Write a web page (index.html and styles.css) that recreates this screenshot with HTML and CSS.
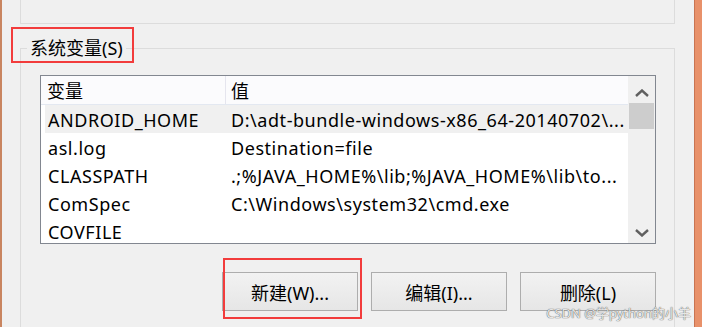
FILE: index.html
```html
<!DOCTYPE html>
<html lang="zh-CN">
<head>
    <meta charset="UTF-8">
    <title>系统变量</title>
    <link rel="stylesheet" href="styles.css">
</head>
<body>
    <div class="edge-left"></div>
    <main class="panel">
        <div class="group-prev"></div>
        <section class="group">
            <div class="group-head">
                <span class="group-title">系统变量(S)</span>
            </div>
            <div class="group-body">
                <div class="listbox">
                    <div class="list">
                        <div class="list-head">
                            <span class="head-name">变量</span>
                            <span class="head-value">值</span>
                        </div>
                        <div class="row selected">
                            <span class="cell-name">ANDROID_HOME</span>
                            <span class="cell-value">D:\adt-bundle-windows-x86_64-20140702\...</span>
                        </div>
                        <div class="row">
                            <span class="cell-name">asl.log</span>
                            <span class="cell-value">Destination=file</span>
                        </div>
                        <div class="row">
                            <span class="cell-name">CLASSPATH</span>
                            <span class="cell-value">.;%JAVA_HOME%\lib;%JAVA_HOME%\lib\to...</span>
                        </div>
                        <div class="row">
                            <span class="cell-name">ComSpec</span>
                            <span class="cell-value">C:\Windows\system32\cmd.exe</span>
                        </div>
                        <div class="row">
                            <span class="cell-name">COVFILE</span>
                            <span class="cell-value"></span>
                        </div>
                    </div>
                    <div class="scrollbar">
                        <span class="arrow">
                            <svg width="14" height="8" viewBox="0 0 14 8"><path d="M1 7 L7 1.5 L13 7" fill="none" stroke="#606060" stroke-width="2.4"/></svg>
                        </span>
                        <span class="thumb"></span>
                        <span class="track"></span>
                        <span class="arrow">
                            <svg width="14" height="8" viewBox="0 0 14 8"><path d="M1 1 L7 6.5 L13 1" fill="none" stroke="#606060" stroke-width="2.4"/></svg>
                        </span>
                    </div>
                </div>
                <div class="buttons">
                    <button type="button">新建(W)...</button>
                    <button type="button">编辑(I)...</button>
                    <button type="button">删除(L)</button>
                </div>
            </div>
        </section>
    </main>
    <div class="edge-right"></div>

    <!-- 标注框 -->
    <div class="mark mark-title"></div>
    <div class="mark mark-new"></div>
    <div class="watermark">CSDN @学python的小羊</div>
</body>
</html>
```

FILE: styles.css
```css
body {
    margin: 0;
    height: 327px;
    overflow: hidden;
    display: flex;
    position: relative;
    background-color: #f0f0f0;
    font-family: "Noto Sans", "Noto Sans CJK SC", sans-serif;
    font-size: 18px;
    color: #000;
}
.edge-left {
    width: 2px;
    background-color: #c98560;
}
.edge-right {
    width: 7px;
    border-left: 1px solid #c97452;
    background-color: #e8916a;
}
.panel {
    flex: 1;
    display: flex;
    flex-direction: column;
    padding: 0 19px 0 18px;
}
.group-prev {
    height: 23px;
    border: 1px solid #dcdcdc;
    border-top: none;
}
.group {
    flex: 1;
    display: flex;
    flex-direction: column;
    margin-top: 12px;
}
.group-head {
    display: flex;
    height: 24px;
}
.group-head::before,
.group-head::after {
    content: "";
    align-self: flex-end;
    height: 11px;
    border-top: 1px solid #dcdcdc;
}
.group-head::before {
    width: 6px;
    border-left: 1px solid #dcdcdc;
}
.group-head::after {
    flex: 1;
    border-right: 1px solid #dcdcdc;
}
.group-title {
    padding: 0 3px;
    line-height: 24px;
}
.group-body {
    flex: 1;
    padding: 0 18px 0 19px;
    border-left: 1px solid #dcdcdc;
    border-right: 1px solid #dcdcdc;
}
.listbox {
    display: flex;
    box-sizing: border-box;
    height: 169px;
    margin-top: 15px;
    border: 1px solid #828790;
    background-color: #ffffff;
}
.list {
    flex: 1;
    min-width: 0;
    overflow: hidden;
}
.list-head {
    display: flex;
    height: 28px;
    line-height: 26px;
    border-bottom: 1px solid #e3e8f1;
    background-color: #fbfbfd;
}
.head-name {
    box-sizing: border-box;
    width: 185px;
    padding: 2px 0 0 6px;
    border-right: 1px solid #e5e5ee;
}
.head-value {
    padding: 2px 0 0 5px;
}
.row {
    display: flex;
    height: 28px;
    line-height: 26px;
    margin-left: 4px;
    white-space: nowrap;
    letter-spacing: 0.55px;
}
.row.selected {
    background-color: #f0f0f0;
}
.cell-name {
    box-sizing: border-box;
    width: 181px;
    padding: 2px 0 0 3px;
}
.cell-value {
    flex: 1;
    min-width: 0;
    overflow: hidden;
    padding: 2px 0 0 5px;
}
.scrollbar {
    width: 27px;
    display: flex;
    flex-direction: column;
    background-color: #f0f0f0;
}
.arrow {
    height: 27px;
    display: flex;
    justify-content: center;
    align-items: center;
    padding-top: 6px;
    box-sizing: border-box;
}
.thumb {
    height: 26px;
    margin: 0 1px;
    background-color: #cdcdcd;
}
.track {
    flex: 1;
}
.buttons {
    display: flex;
    justify-content: flex-end;
    gap: 13px;
    margin-top: 28px;
}
.buttons button {
    width: 136px;
    height: 39px;
    border: 1px solid #adadad;
    border-radius: 0;
    background: linear-gradient(#f2f2f2, #e6e6e6);
    font-family: inherit;
    font-size: 18px;
    color: #000;
    padding: 0;
}
.mark {
    position: absolute;
    box-sizing: border-box;
    border: 2px solid #f23c3c;
}
.mark-title {
    left: 11px;
    top: 27px;
    width: 123px;
    height: 36px;
}
.mark-new {
    left: 223px;
    top: 258px;
    width: 139px;
    height: 61px;
}
.watermark {
    position: absolute;
    right: 11px;
    bottom: 5px;
    font-size: 13px;
    color: rgba(250, 250, 250, 0.9);
    text-shadow: 0 0 1px #555555, 0 0 1px #777777;
}
```
